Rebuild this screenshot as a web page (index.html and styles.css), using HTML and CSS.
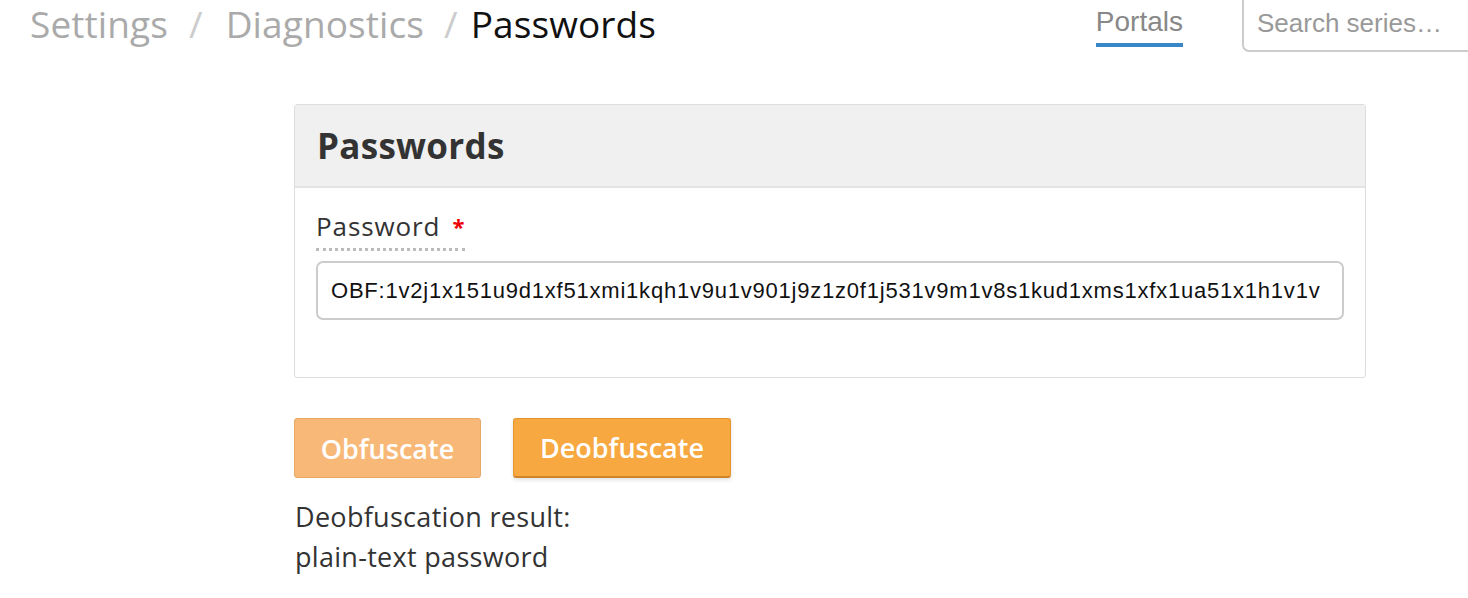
FILE: index.html
```html
<!DOCTYPE html>
<html>
<head>
<meta charset="utf-8">
<link rel="stylesheet" href="styles.css">
</head>
<body>
<header class="topbar">
  <nav class="crumbs">
    <span class="crumb">Settings</span>
    <span class="sep">/</span>
    <span class="crumb">Diagnostics</span>
    <span class="sep sep-last">/</span>
    <span class="crumb current">Passwords</span>
  </nav>
  <div class="right">
    <a class="tab">Portals</a>
    <div class="search">Search series…</div>
  </div>
</header>
<main class="content">
  <section class="panel">
    <div class="panel-head"><h2>Passwords</h2></div>
    <div class="panel-body">
      <label class="label"><span class="label-text">Password</span><span class="req">*</span></label>
      <div class="input">OBF:1v2j1x151u9d1xf51xmi1kqh1v9u1v901j9z1z0f1j531v9m1v8s1kud1xms1xfx1ua51x1h1v1v</div>
    </div>
  </section>
  <div class="actions">
    <button class="btn disabled">Obfuscate</button>
    <button class="btn primary">Deobfuscate</button>
  </div>
  <p class="result">Deobfuscation result:<br>plain-text password</p>
</main>
</body>
</html>
```
FILE: styles.css
```css
html, body {
  margin: 0;
  padding: 0;
  background: #fff;
  font-family: "Open Sans", "Noto Sans", sans-serif;
  color: #333;
}
.topbar {
  display: flex;
  justify-content: space-between;
  align-items: flex-start;
  height: 61px;
}
.crumbs {
  padding-left: 30px;
  font-size: 37px;
  line-height: 48px;
  display: flex;
  letter-spacing: 0.1px;
}
.crumb { color: #aaa; }
.crumb.current { color: #111; }
.sep { color: #ccc; margin: 0 23px 0 21px; }
.sep.sep-last { margin: 0 13px 0 20px; }
.right {
  display: flex;
  align-items: flex-start;
}
.tab {
  font-family: "Liberation Sans", Arial, sans-serif;
  font-size: 28px;
  line-height: 40px;
  color: #888;
  padding: 2px 0 0;
  margin-right: 59px;
  border-bottom: 4px solid #3a87c8;
  box-sizing: border-box;
  height: 47px;
}
.search {
  font-family: "Liberation Sans", Arial, sans-serif;
  width: 226px;
  height: 52px;
  box-sizing: border-box;
  border: 2px solid #ccc;
  border-top: none;
  border-right: none;
  border-bottom-left-radius: 7px;
  font-size: 26px;
  color: #999;
  padding: 4px 0 0 13px;
  line-height: 38px;
  white-space: nowrap;
  overflow: hidden;
}
.content {
  padding-left: 294px;
  padding-top: 43px;
  width: 1072px;
}
.panel {
  border: 1px solid #ddd;
  border-radius: 3px;
  background: #fff;
}
.panel-head {
  background: #f0f0f0;
  border-bottom: 2px solid #e4e4e4;
  height: 81px;
  padding-left: 22px;
  display: flex;
  align-items: center;
}
.panel-head h2 {
  margin: 0;
  font-size: 35px;
  font-weight: 700;
  color: #333;
  letter-spacing: 0.3px;
}
.panel-body {
  padding: 21px 21px 57px 21px;
}
.label {
  display: inline-flex;
  align-items: flex-start;
  border-bottom: 3px dotted #bbb;
  padding-bottom: 5px;
  margin-bottom: 10px;
  font-size: 26px;
  line-height: 34px;
  color: #333;
  letter-spacing: 0.9px;
}
.req {
  color: #e00;
  margin-left: 12px;
  font-weight: 700;
  font-size: 22px;
}
.input {
  font-family: "Liberation Sans", Arial, sans-serif;
  border: 2px solid #ccc;
  border-radius: 7px;
  height: 59px;
  box-sizing: border-box;
  padding: 0 13px;
  font-size: 22px;
  line-height: 55px;
  color: #111;
  white-space: nowrap;
  overflow: hidden;
  letter-spacing: 0.78px;
}
.actions {
  display: flex;
  gap: 32px;
  margin-top: 40px;
}
.btn {
  font-family: inherit;
  font-size: 27px;
  font-weight: 600;
  color: #fff;
  height: 60px;
  border-radius: 3px;
  padding: 0;
  cursor: pointer;
}
.btn.disabled {
  background: #f8b978;
  border: 1px solid #e8a868;
  width: 187px;
}
.btn.primary {
  background: #f7a840;
  border: 1px solid #e39630;
  border-bottom: 2px solid #cf842a;
  width: 218px;
  box-shadow: 0 2px 4px rgba(0,0,0,0.12);
}
.result {
  margin: 19px 0 0 1px;
  font-size: 27px;
  line-height: 40px;
  color: #333;
  letter-spacing: 0.3px;
}
```
